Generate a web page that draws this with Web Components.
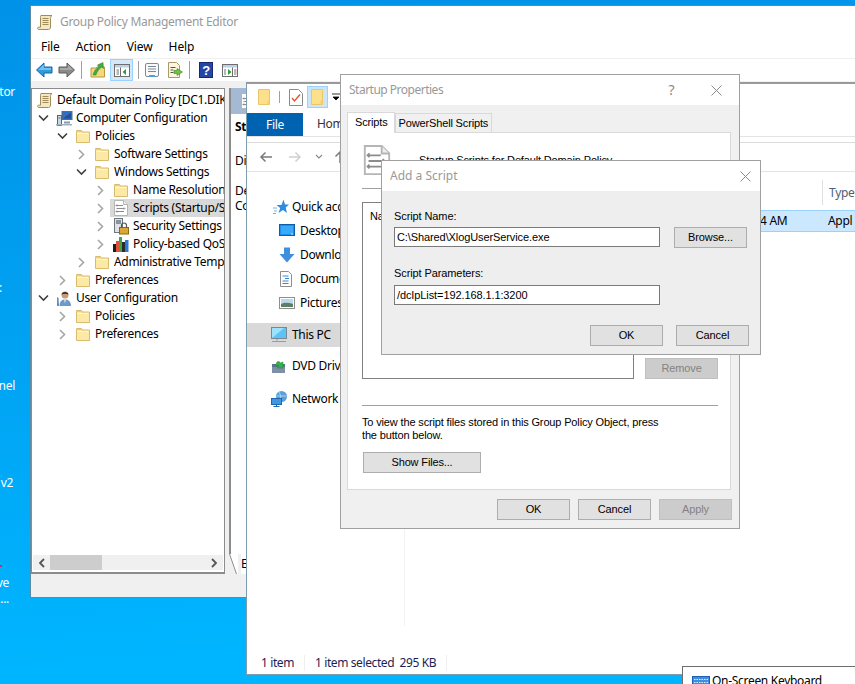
<!DOCTYPE html>
<html>
<head>
<meta charset="utf-8">
<title>Add a Script</title>
<style>
  html, body { margin: 0; height: 100%; overflow: hidden; }
  body { font: 12px/16px "Noto Sans", sans-serif; letter-spacing: -0.3px; color: #000; }
</style>
</head>
<body>
<desk-top>
  <desk-label y="84" end="15">tor</desk-label>
  <desk-label y="280" end="2">:</desk-label>
  <desk-label y="378" end="15">nel</desk-label>
  <desk-label y="475" end="13">v2</desk-label>
  <desk-label y="575" end="9">ve</desk-label>
  <desk-label y="591" end="9">....</desk-label>

  <gpo-window></gpo-window>
  <explorer-window></explorer-window>
  <props-dialog></props-dialog>
  <script-dialog></script-dialog>
  <osk-window></osk-window>
</desk-top>

<script>
const ICONS = {
  scroll: '<path d="M4 1.5h11c-1 .6-1.5 1.5-1.5 3V13c0 1.6-1 2.5-2 2.5H2c-.8 0-1.5-.6-1.5-1.3 0-.6.5-1 1.5-1h1.5V3.5C3.5 2.4 3.3 1.8 4 1.5z" fill="#f3e7c4" stroke="#a08c5a"/><path d="M5.5 4.5h6M5.5 6.5h6M5.5 8.5h6M5.5 10.5h6" stroke="#a08c5a"/>',
  folder: '<path d="M1.5 3.5V2.5h5l1 1.5h7v10.5h-13z" fill="#fde9a6" stroke="#d9bb6e"/><path d="M2.5 5.5h11" stroke="#fff6d4"/><path d="M2 3.5h4.500l1 1.500" stroke="#e8cd85" fill="none"/>',
  computer: '<rect x="6" y="1.500" width="10" height="8" fill="#2f6fc0" stroke="#5a6b80"/><path d="M7 8.500h8V2.500z" fill="#1f4f9e"/><path d="M8 12.500h6" stroke="#8a97a6" stroke-width="2"/><rect x="1.500" y="5.500" width="4" height="10" fill="#cfd8e2" stroke="#53667a"/><path d="M2.500 8h2" stroke="#2f6fc0"/><rect x="0" y="14" width="16" height="1.500" fill="#9fb0c2"/>',
  user: '<circle cx="9" cy="5" r="3.500" fill="#c99a76"/><path d="M5.500 4.500C6 1 12 1 12.500 4.500c-2-1-5-1-7 0z" fill="#2b2b2b"/><path d="M3.500 16c0-5 2.500-6.500 5.500-6.500s6 1.500 6 6.500z" fill="#6d9ac9"/><path d="M1 7l1.500 1L3 16H1z" fill="#5d8cbf"/><path d="M8 9.500l1 4 1-4z" fill="#e6edf4"/>',
  script: '<path d="M1.500 .5h9l4 4v11h-13z" fill="#fff" stroke="#b5b5b5"/><path d="M10.500 .5v4h4" fill="#eee" stroke="#b5b5b5"/><path d="M3 5.500h7M3.500 8.500h8M3 11.500h8" stroke="#8c8c8c"/><path d="M4 4.500l-1 1 1 1M11 7.500l1 1-1 1M4 10.500l-1 1 1 1" stroke="#8c8c8c" fill="none"/>',
  security: '<rect x="1.500" y=".5" width="8" height="14" fill="#dfe3e8" stroke="#6c7680"/><path d="M3 3h5M3 5h5" stroke="#39424c"/><rect x="6.500" y="9.500" width="9" height="6.500" fill="#d9a832" stroke="#8a6a12"/><path d="M8.500 9.500V7.500a2.500 2.500 0 0 1 5 0v2" stroke="#555" stroke-width="1.200" fill="none"/>',
  qos: '<rect x="0" y="8" width="3" height="8" fill="#1d1d1d"/><rect x="3" y="5" width="3" height="11" fill="#e0503a"/><rect x="6" y="1" width="3" height="15" fill="#3fa648"/><rect x="9" y="6" width="3" height="10" fill="#2b2b2b"/><rect x="12" y="4" width="3.500" height="12" fill="#2f7ad0"/>',
  back: '<path d="M8 1 .5 8 8 15v-4h8V5H8z" fill="#2e9bdc" stroke="#1767a8"/><path d="M8 2.500 2 8h13V6H8z" fill="#8fd0f5" opacity=".7"/>',
  fwd: '<path d="M8 1l7.500 7L8 15v-4H0V5h8z" fill="#8a8a8a" stroke="#5c5c5c"/><path d="M1 6h8V2.500L14 8H1z" fill="#b5b5b5" opacity=".7"/>',
  upfolder: '<path d="M1 6h5l1-1h7.500v10H1z" fill="#f4d77e" stroke="#b69a44"/><path d="M3 13c1-4 3-6.500 6-8L7.500 3 13 .5l.5 6-1.800-1.500C9 7 7 9.500 6 13z" fill="#3fae3c" stroke="#2a7d28" stroke-width=".5"/>',
  tree: '<rect x=".5" y="2.500" width="15" height="12" fill="#fff" stroke="#6e6e6e"/><rect x="1" y="3" width="14" height="2.500" fill="#bcd0e6"/><path d="M6.500 5.500v9M2.500 8h2.500M2.500 10h2.500M2.500 12h2.500" stroke="#6e6e6e"/><path d="M12 7v6L8.500 10z" fill="#2e9b3c"/>',
  list: '<rect x="1.500" y="1.500" width="13" height="13" rx="1.500" fill="#fafafa" stroke="#7d8a96"/><path d="M4 4.500h8M4 7h8M4 9.500h8" stroke="#7d8a96"/><rect x="5" y="13" width="6" height="2" fill="#4aa3df"/>',
  exportlist: '<path d="M1.500 .5h8l3 3v12h-11z" fill="#fdf6dc" stroke="#a8986a"/><path d="M3.500 5.500h5M3.500 8h3M3.500 10.500h3" stroke="#555"/><path d="M9 6.500v2H6v3h3v2l5.500-3.500z" transform="translate(1)" fill="#6fc04a" stroke="#3d8a24" stroke-width=".6"/>',
  help: '<rect x=".5" y=".5" width="13" height="15" fill="#2646a6" stroke="#14296e"/><text x="7" y="13" text-anchor="middle" font-size="13" font-family="Liberation Sans" font-weight="700" fill="#fff">?</text>',
  panel: '<rect x=".5" y="2.500" width="15" height="12" fill="#fff" stroke="#6e6e6e"/><rect x="1" y="3" width="14" height="2.500" fill="#bcd0e6"/><path d="M10.500 5.500v9M12 8h2.500M12 10h2.500M12 12h2.500M2 8h2M2 10h2M2 12h2" stroke="#6e6e6e"/><path d="M6 7v6l3.500-3z" fill="#2e9b3c"/>',
  qfolder: '<path d="M1.500 .5h11v15h-11z" fill="#fde18a" stroke="#e8c76c"/><path d="M10.500 11.500h2v4h-2z" fill="#f6cf5e"/>',
  qcheck: '<path d="M.5 .5h9l4 4v12H.5z" fill="#fff" stroke="#8a8a8a"/><path d="M3 9l2.500 3L11 5.500" stroke="#e2552b" stroke-width="1.400" fill="none"/>',
  star: '<path d="M10.500 .5l1.500 5h4l-3.300 3 1.300 5.500-4-3-4.500 3 1.700-5L3.500 6h5z" fill="#2f8be0"/><path d="M0 9h4M1 12h3M0 14.500h3" stroke="#6db3ee"/>',
  desktop: '<rect x=".5" y="1.500" width="15" height="11" fill="#1e90ef" stroke="#0d5ca8"/><rect x="2" y="3" width="12" height="8" fill="#38aaf7"/><path d="M12 11h2" stroke="#cfe9ff"/>',
  download: '<path d="M5 .5h6V7h4.500L8 15.500.5 7H5z" fill="#3e8fdc"/>',
  doc: '<path d="M1.500 .5h8l3 3v12h-11z" fill="#fff" stroke="#8e8e8e"/><path d="M3.500 5h6M6 7.500h4M3.500 10h6M3.500 12.500h6" stroke="#3a87d6"/>',
  pic: '<rect x=".5" y="2.500" width="15" height="11" fill="#fff" stroke="#8e8e8e"/><rect x="2" y="4" width="12" height="8" fill="#bcd9ea"/><path d="M2 9c4-2 8-1 12 0v3H2z" fill="#5c7f6a"/>',
  pc: '<rect x=".5" y=".5" width="15" height="11" fill="#5cc4f5" stroke="#7b8894"/><path d="M1 11V1h12z" fill="#9fe0fb"/><path d="M6 12v1.500M1 14.500h14" stroke="#8da0b0" stroke-width="1.200"/>',
  dvd: '<path d="M1 6h13v9H1z" fill="#7f8fa8"/><path d="M1 6h13v3H1z" fill="#5f7190"/><path d="M8 .5c1 0 2 .5 2.500 1.500L13 1v6H7l2-1.500C8.500 4 7.500 4 6 5 6 3 6.500 .5 8 .5z" transform="translate(-1 3)" fill="#34b24a" stroke="#1f8a33" stroke-width=".5"/>',
  network: '<circle cx="10.500" cy="5.500" r="5.500" fill="#5b9fd8"/><path d="M8 1c2 3 2 6 1 10M5.500 5h10" stroke="#cfe6f7" stroke-width=".7" fill="none"/><rect x=".5" y="7.500" width="10" height="6" fill="#3f97e0" stroke="#1c67ad"/><path d="M5.500 13.500v2M2.500 15.500h6" stroke="#1c67ad"/>',
  keyboard: '<rect x=".5" y="3.500" width="17" height="13" fill="#3f8ee0" stroke="#1d5fae"/><path d="M2 6.500h14M2 9.500h14M2 12.500h14" stroke="#dbeeff" stroke-dasharray="1.500 1"/>'
};

class UiIcon extends HTMLElement {
  connectedCallback() {
    const size = this.getAttribute("size") || 16;
    const root = this.shadowRoot || this.attachShadow({ mode: "open" });
    root.innerHTML = `
      <style>
        :host { display: inline-flex; flex: none; width: ${size}px; height: ${size}px; }
        svg { display: block; width: 100%; height: 100%; overflow: visible; }
      </style>
      <svg viewBox="0 0 16 16">${ICONS[this.getAttribute("name")] || ""}</svg>`;
  }
}

class DeskTop extends HTMLElement {
  constructor() {
    super();
    this.attachShadow({ mode: "open" }).innerHTML = `
      <style>
        :host {
          display: block;
          position: relative;
          width: 855px;
          height: 684px;
          overflow: hidden;
          background: linear-gradient(175deg, #0092e8 0%, #00a2f2 45%, #00b5ff 88%);
        }
        .dot { position: absolute; left: 0; top: 565px; width: 2px; height: 2px; background: #c8305a; }
      </style>
      <slot></slot><div class="dot"></div>`;
  }
}

class DeskLabel extends HTMLElement {
  constructor() {
    super();
    this.attachShadow({ mode: "open" }).innerHTML = `
      <style>
        :host { position: absolute; white-space: nowrap; color: #fff; }
      </style>
      <slot></slot>`;
  }
  connectedCallback() {
    this.style.top = this.getAttribute("y") + "px";
    this.style.right = `calc(100% - ${this.getAttribute("end")}px)`;
  }
}

class TitleBar extends HTMLElement {
  connectedCallback() {
    const help = this.hasAttribute("help") ? `<span class="help">?</span>` : "";
    this.attachShadow({ mode: "open" }).innerHTML = `
      <style>
        :host {
          display: flex;
          align-items: center;
          flex: none;
          height: 30px;
          padding-left: 8px;
          background: #fff;
          color: #999;
          font: 12px/16px "Noto Sans", sans-serif;
        }
        .name { flex: 1; }
        .help { margin-right: 37px; font-size: 14px; color: #8a8a8a; }
        svg { width: 11px; height: 11px; margin-right: var(--close-gap, 9px); display: block; }
      </style>
      <span class="name"><slot></slot></span>
      ${help}
      <svg viewBox="0 0 11 11"><path d="M.5.5l10 10M10.500.5l-10 10" stroke="#8a8a8a" fill="none"/></svg>`;
  }
}

class UiButton extends HTMLElement {
  constructor() {
    super();
    this.attachShadow({ mode: "open" }).innerHTML = `
      <style>
        :host {
          display: inline-flex;
          align-items: center;
          justify-content: center;
          box-sizing: border-box;
          width: 73px;
          height: 21px;
          background: #e1e1e1;
          border: 1px solid #adadad;
        }
        :host([disabled]) { background: #ccc; border-color: #bfbfbf; color: #838383; }
      </style>
      <slot></slot>`;
  }
}

class TreeRow extends HTMLElement {
  connectedCallback() {
    const level = +this.getAttribute("level");
    const exp = this.getAttribute("exp");
    const pad = 5 + Math.max(level - 1, 0) * 19;
    let chev = "";
    if (level > 0) {
      chev = exp === "open"
        ? `<svg class="chev" viewBox="0 0 19 18"><path d="M2 6.500l4.500 4.500L11 6.500" stroke="#404040" stroke-width="1.600" fill="none"/></svg>`
        : `<svg class="chev" viewBox="0 0 19 18"><path d="M4 5l4.500 4.500L4 14" stroke="#a6a6a6" stroke-width="1.600" fill="none"/></svg>`;
    }
    this.attachShadow({ mode: "open" }).innerHTML = `
      <style>
        :host { display: flex; align-items: center; height: 18px; padding-left: ${pad}px; white-space: nowrap; }
        .chev { width: 19px; height: 18px; flex: none; }
        .label { flex: 1; display: flex; align-items: center; height: 18px; gap: 4px; padding-left: 3px; margin-left: -3px; }
        :host([selected]) .label { background: #d9d9d9; }
      </style>
      ${chev}
      <span class="label"><ui-icon name="${this.getAttribute("icon")}"></ui-icon><slot></slot></span>`;
  }
}

class ToolBtn extends HTMLElement {
  connectedCallback() {
    this.attachShadow({ mode: "open" }).innerHTML = `
      <style>
        :host { display: flex; align-items: center; box-sizing: border-box; height: 22px; width: 23px; padding-left: 3px; }
        :host([active]) { background: #d5e8f8; border: 1px solid #99d1ff; }
      </style>
      <ui-icon name="${this.getAttribute("icon")}"></ui-icon>`;
  }
}

class GpoWindow extends HTMLElement {
  constructor() {
    super();
    this.attachShadow({ mode: "open" }).innerHTML = `
      <style>
        :host {
          position: absolute;
          left: 30px;
          top: 5px;
          width: 840px;
          height: 593px;
          box-sizing: border-box;
          border: 1px solid #5f8aa6;
          display: flex;
          flex-direction: column;
          background: #f0f0f0;
        }
        .title { display: flex; align-items: center; gap: 7px; height: 32px; padding-left: 6px; background: #fff; color: #999; }
        .menu { display: flex; height: 18px; padding-bottom: 2px; align-items: center; background: #fff; padding-left: 10px; gap: 16px; letter-spacing: -0.1px; }
        .bar {
          display: flex; align-items: center; height: 23px; background: #fff;
          border-top: 1px solid #f0f0f0; box-sizing: border-box; padding-left: 2px;
        }
        .sep { width: 1px; height: 18px; background: #a0a0a0; }
        .main { flex: 1; display: flex; min-height: 0; padding-top: 7px; }
        .tree {
          width: 194px; box-sizing: border-box; flex: none;
          border: 1px solid #8c8c8c; border-bottom-width: 2px; border-right-width: 1px;
          background: #fff; display: flex; flex-direction: column;
        }
        .rows { flex: 1; overflow: hidden; padding-top: 2px; }
        .hs { display: flex; align-items: center; justify-content: space-between; height: 15px; margin: 0 1px 2px; background: #f0f0f0; position: relative; padding: 0 5px; }
        .thumb { position: absolute; left: 17px; top: 0; width: 52px; height: 15px; background: #cdcdcd; }
        .right { flex: 1; margin-left: 4px; display: flex; flex-direction: column; min-width: 0; }
        .pane { flex: 1; border-left: 2px solid #8c8c8c; background: #fff; }
        .head { height: 26px; background: #a3b9d4; display: flex; align-items: center; padding-left: 9px; }
        .pane p { margin: 0; padding-left: 4px; white-space: nowrap; }
        .pane p.tight { line-height: 15px; }
        .tabs { display: flex; align-items: center; height: 20px; background: #f0f0f0; gap: 3px; }
        .tabs span { background: #fff; line-height: 20px; padding-right: 20px; flex: 1; }
        .foot { height: 23px; flex: none; }
      </style>
      <div class="title"><ui-icon name="scroll"></ui-icon><span>Group Policy Management Editor</span></div>
      <div class="menu"><span>File</span><span>Action</span><span>View</span><span>Help</span></div>
      <div class="bar">
        <tool-btn icon="back"></tool-btn><tool-btn icon="fwd"></tool-btn>
        <div class="sep" style="margin:0 5px 0 2px"></div>
        <tool-btn icon="upfolder"></tool-btn><tool-btn icon="tree" active></tool-btn>
        <div class="sep" style="margin:0 2px 0 5px"></div>
        <tool-btn icon="list"></tool-btn><tool-btn icon="exportlist"></tool-btn>
        <div class="sep" style="margin:0 6px 0 2px"></div>
        <tool-btn icon="help"></tool-btn><tool-btn icon="panel"></tool-btn>
      </div>
      <div class="main">
        <div class="tree">
          <div class="rows">
            <tree-row level="0" icon="scroll">Default Domain Policy [DC1.DIK</tree-row>
            <tree-row level="1" exp="open" icon="computer">Computer Configuration</tree-row>
            <tree-row level="2" exp="open" icon="folder">Policies</tree-row>
            <tree-row level="3" icon="folder">Software Settings</tree-row>
            <tree-row level="3" exp="open" icon="folder">Windows Settings</tree-row>
            <tree-row level="4" icon="folder">Name Resolution</tree-row>
            <tree-row level="4" icon="script" selected>Scripts (Startup/S</tree-row>
            <tree-row level="4" icon="security">Security Settings</tree-row>
            <tree-row level="4" icon="qos">Policy-based QoS</tree-row>
            <tree-row level="3" icon="folder">Administrative Temp</tree-row>
            <tree-row level="2" icon="folder">Preferences</tree-row>
            <tree-row level="1" exp="open" icon="user">User Configuration</tree-row>
            <tree-row level="2" icon="folder">Policies</tree-row>
            <tree-row level="2" icon="folder">Preferences</tree-row>
          </div>
          <div class="hs">
            <svg width="8" height="10" viewBox="0 0 8 10"><path d="M6 1L2 5l4 4" stroke="#555" stroke-width="1.800" fill="none"/></svg>
            <div class="thumb"></div>
            <svg width="8" height="10" viewBox="0 0 8 10"><path d="M2 1l4 4-4 4" stroke="#555" stroke-width="1.800" fill="none"/></svg>
          </div>
        </div>
        <div class="right">
          <div class="pane">
            <div class="head"><ui-icon name="script"></ui-icon></div>
            <p style="font-weight:700;margin-top:5px">St</p>
            <p style="margin-top:18px">Di</p>
            <p class="tight" style="margin-top:14px">De</p>
            <p class="tight">Co</p>
          </div>
          <div class="tabs">
            <svg width="9" height="20" viewBox="0 0 9 20" style="flex:none"><path d="M0 0h9v20H7z" fill="#fff"/><path d="M.5 0L7.500 20" stroke="#8c8c8c" fill="none"/></svg>
            <span>E</span>
          </div>
        </div>
      </div>
      <div class="foot"></div>`;
  }
}

class NavRow extends HTMLElement {
  connectedCallback() {
    const indent = this.getAttribute("indent") || 24;
    const gap = this.getAttribute("gap") || 5;
    this.attachShadow({ mode: "open" }).innerHTML = `
      <style>
        :host { display: flex; align-items: center; gap: ${gap}px; height: 24px; padding-left: ${indent}px; white-space: nowrap; }
        :host([selected]) { background: #d9d9d9; }
      </style>
      <ui-icon name="${this.getAttribute("icon")}"></ui-icon><slot></slot>`;
  }
}

class ExplorerWindow extends HTMLElement {
  constructor() {
    super();
    this.attachShadow({ mode: "open" }).innerHTML = `
      <style>
        :host {
          position: absolute;
          left: 246px;
          top: 82px;
          width: 625px;
          height: 593px;
          box-sizing: border-box;
          border: 1px solid #7f9db0;
          border-top-color: #9a9a9a;
          border-top-width: 2px;
          background: #fff;
          display: flex;
          flex-direction: column;
        }
        .qat { display: flex; align-items: center; height: 26px; padding: 0 0 3px 10px; gap: 4px; }
        .qat i { width: 1px; height: 12px; background: #a0a0a0; margin: 0 5px 0 2px; }
        .qsel { display: flex; align-items: center; justify-content: center; width: 21px; height: 22px; margin-left: -2px; box-sizing: border-box; background: #cde6f7; border: 1px solid #99d1ff; }
        .tabs { display: flex; height: 23px; border-bottom: 1px solid #e4e4e4; }
        .file { width: 56px; background: #0063b1; color: #fff; display: flex; align-items: center; justify-content: center; }
        .home { padding: 3px 14px; color: #333; }
        .gap5 { height: 5px; border-bottom: 1px solid #dcdcdc; }
        .nav { display: flex; align-items: center; height: 28px; padding-left: 12px; border-bottom: 1px solid #e4e4e4; }
        .cols { display: grid; grid-template-columns: 158px 1fr; flex: 1; min-height: 0; }
        .side { border-right: 1px solid #f2f2f2; padding-top: 23px; margin-bottom: 24px; }
        .gapA { height: 8px; }
        .gapB { height: 7px; }
        .gapC { height: 9px; }
        .list { min-width: 0; padding-top: 7px; }
        .hdr { display: flex; height: 26px; align-items: center; padding-left: 417px; color: #4c607a; }
        .hdr span { border-left: 1px solid #e0e0e0; height: 25px; line-height: 25px; padding-left: 6px; }
        .row { display: flex; align-items: center; height: 20px; margin-top: 5px; background: #cce8ff; border: 1px solid #99d1ff; padding-left: 354px; white-space: nowrap; }
        .row b { font-weight: 400; width: 68px; }
        .status { display: flex; align-items: center; flex: none; height: 22px; padding: 2px 0 0 14px; color: #1e1e50; letter-spacing: -0.4px; }
        .status i { width: 1px; height: 16px; background: #f0f0f0; margin: 0 10px; }
      </style>
      <div class="qat">
        <ui-icon name="qfolder"></ui-icon><i></i>
        <ui-icon name="qcheck"></ui-icon>
        <span class="qsel"><ui-icon name="qfolder"></ui-icon></span>
        <svg width="8" height="8" viewBox="0 0 8 8"><path d="M0 1h8M1 4h6l-3 3z" stroke="#000" fill="#000" stroke-width=".8"/></svg>
      </div>
      <div class="tabs"><div class="file">File</div><div class="home">Home</div></div>
      <div class="gap5"></div>
      <div class="nav">
        <svg width="14" height="12" viewBox="0 0 14 12"><path d="M13 6H2M6.500 1.500L2 6l4.500 4.500" stroke="#7a7a7a" stroke-width="1.500" fill="none"/></svg>
        <svg width="14" height="12" viewBox="0 0 14 12" style="margin-left:15px"><path d="M1 6h11M7.500 1.500L12 6l-4.500 4.500" stroke="#d0d0d0" stroke-width="1.500" fill="none"/></svg>
        <svg width="8" height="6" viewBox="0 0 8 6" style="margin-left:13px"><path d="M1 1l3 3 3-3" stroke="#8a8a8a" stroke-width="1.200" fill="none"/></svg>
        <svg width="12" height="14" viewBox="0 0 12 14" style="margin-left:11px"><path d="M6 13V2M1.500 6.500L6 2l4.500 4.500" stroke="#7a7a7a" stroke-width="1.500" fill="none"/></svg>
      </div>
      <div class="cols">
        <div class="side">
          <nav-row icon="star" indent="26" gap="3">Quick access</nav-row>
          <nav-row icon="desktop" indent="32">Desktop</nav-row>
          <nav-row icon="download" indent="32">Downloads</nav-row>
          <nav-row icon="doc" indent="32">Documents</nav-row>
          <nav-row icon="pic" indent="32">Pictures</nav-row>
          <div class="gapA"></div>
          <nav-row icon="pc" indent="24" selected>This PC</nav-row>
          <div class="gapB"></div>
          <nav-row icon="dvd" indent="24">DVD Drive</nav-row>
          <div class="gapC"></div>
          <nav-row icon="network" indent="24">Network</nav-row>
        </div>
        <div class="list">
          <div class="hdr"><span>Type</span></div>
          <div class="row"><b>4 AM</b><span>Appl</span></div>
        </div>
      </div>
      <div class="status"><span>1 item</span><i></i><span>1 item selected&nbsp; 295 KB</span><i></i></div>`;
  }
}

class PropsDialog extends HTMLElement {
  constructor() {
    super();
    this.attachShadow({ mode: "open" }).innerHTML = `
      <style>
        :host {
          position: absolute;
          left: 340px;
          top: 74px;
          width: 400px;
          height: 455px;
          box-sizing: border-box;
          border: 1px solid #a0a0a0;
          background: #f0f0f0;
          display: flex;
          flex-direction: column;
          font: 11px/13px "Liberation Sans", Arial, sans-serif;
          letter-spacing: -0.15px;
        }
        title-bar { letter-spacing: -0.5px; --close-gap: 17px; }
        .tabs { display: flex; align-items: flex-end; height: 27px; padding-left: 6px; position: relative; z-index: 1; }
        .tab { height: 18px; line-height: 18px; padding: 0 3px; border: 1px solid #d9d9d9; border-bottom: 0; background: #f0f0f0; white-space: nowrap; }
        .tab.on { height: 20px; background: #fff; padding: 0 6px 0 7px; margin-bottom: -1px; }
        .panel {
          flex: 1; margin: 0 8px 0 6px; border: 1px solid #d9d9d9; background: #fff;
          box-sizing: border-box; padding: 12px 12px 0 14px; display: flex; flex-direction: column;
        }
        .intro { display: flex; align-items: flex-start; gap: 27px; height: 32px; white-space: nowrap; }
        .intro span { margin-top: 9px; }
        .rule { height: 1px; background: #a0a0a0; flex: none; }
        .listwrap { display: flex; gap: 11px; align-items: flex-end; margin: 13px 0 26px; }
        .box { width: 273px; height: 177px; box-sizing: border-box; border: 1px solid #7f7f7f; padding: 7px; }
        .text { margin: 10px 55px 0 0; line-height: 13px; }
        .show { margin: 10px 0 0 1px; width: 118px; }
        .foot { display: flex; justify-content: flex-end; gap: 8px; height: 38px; padding: 9px 7px 0 0; box-sizing: border-box; }
      </style>
      <title-bar help>Startup Properties</title-bar>
      <div class="tabs"><div class="tab on">Scripts</div><div class="tab">PowerShell Scripts</div></div>
      <div class="panel">
        <div class="intro">
          <ui-icon name="script" size="30"></ui-icon>
          <span>Startup Scripts for Default Domain Policy</span>
        </div>
        <div class="rule" style="margin-top:11px"></div>
        <div class="listwrap">
          <div class="box">Na</div>
          <ui-button disabled>Remove</ui-button>
        </div>
        <div class="rule"></div>
        <div class="text">To view the script files stored in this Group Policy Object, press the button below.</div>
        <ui-button class="show">Show Files...</ui-button>
      </div>
      <div class="foot"><ui-button>OK</ui-button><ui-button>Cancel</ui-button><ui-button disabled>Apply</ui-button></div>`;
  }
}

class ScriptDialog extends HTMLElement {
  constructor() {
    super();
    this.attachShadow({ mode: "open" }).innerHTML = `
      <style>
        :host {
          position: absolute;
          left: 381px;
          top: 160px;
          width: 380px;
          height: 195px;
          box-sizing: border-box;
          border: 1px solid #a0a0a0;
          background: #eee;
          display: flex;
          flex-direction: column;
          font: 11px/13px "Liberation Sans", Arial, sans-serif;
          letter-spacing: -0.1px;
        }
        title-bar { letter-spacing: 0; --close-gap: 9px; }
        .body { flex: 1; padding: 16px 11px 0 12px; }
        .line { display: flex; gap: 14px; align-items: flex-start; }
        label { display: block; height: 20px; line-height: 18px; }
        .input {
          width: 266px; height: 20px; box-sizing: border-box; border: 1px solid #7a7a7a;
          background: #fff; padding-left: 2px; line-height: 18px; white-space: nowrap;
        }
        .foot { display: flex; justify-content: flex-end; gap: 13px; margin-top: 20px; }
      </style>
      <title-bar>Add a Script</title-bar>
      <div class="body">
        <label>Script Name:</label>
        <div class="line"><div class="input">C:\\Shared\\XlogUserService.exe</div><ui-button>Browse...</ui-button></div>
        <label style="margin-top:16px;height:21px">Script Parameters:</label>
        <div class="line"><div class="input">/dcIpList=192.168.1.1:3200</div></div>
        <div class="foot"><ui-button>OK</ui-button><ui-button>Cancel</ui-button></div>
      </div>`;
  }
}

class OskWindow extends HTMLElement {
  constructor() {
    super();
    this.attachShadow({ mode: "open" }).innerHTML = `
      <style>
        :host {
          position: absolute;
          left: 682px;
          top: 666px;
          width: 190px;
          height: 40px;
          box-sizing: border-box;
          border: 1px solid #6d6d6d;
          background: #fff;
          display: flex;
          gap: 4px;
          padding: 6px 0 0 9px;
          white-space: nowrap;
        }
      </style>
      <ui-icon name="keyboard" size="16"></ui-icon><span>On-Screen Keyboard</span>`;
  }
}

customElements.define("ui-icon", UiIcon);
customElements.define("desk-top", DeskTop);
customElements.define("desk-label", DeskLabel);
customElements.define("title-bar", TitleBar);
customElements.define("ui-button", UiButton);
customElements.define("tree-row", TreeRow);
customElements.define("tool-btn", ToolBtn);
customElements.define("gpo-window", GpoWindow);
customElements.define("nav-row", NavRow);
customElements.define("explorer-window", ExplorerWindow);
customElements.define("props-dialog", PropsDialog);
customElements.define("script-dialog", ScriptDialog);
customElements.define("osk-window", OskWindow);
</script>
</body>
</html>
